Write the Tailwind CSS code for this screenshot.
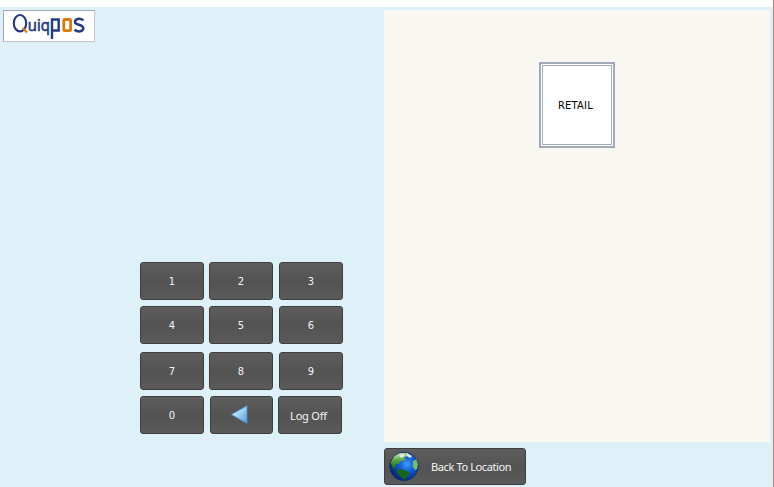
<!DOCTYPE html>
<html lang="en">
<head>
<meta charset="utf-8">
<title>Quiqpos</title>
<script src="https://cdn.jsdelivr.net/npm/@tailwindcss/browser@4"></script>
</head>
<body class="flex w-[774px] h-[487px] overflow-hidden bg-[#def1f8] text-[11px] leading-none font-['DejaVu_Sans_Condensed','DejaVu_Sans',sans-serif]">
<div class="flex h-[487px] w-[773px] shrink-0 border-t-[7px] border-t-white">
  <section class="w-[384px] shrink-0 pt-[3px]">
    <div class="ml-[3px] h-8 w-[92px] border border-[#c2c6d2] border-t-[#a4a8b4] border-l-[#a4a8b4] bg-white">
      <svg class="block" width="90" height="30" viewBox="4 11 90 30" fill="none" stroke="#253b80">
        <ellipse cx="20" cy="23.2" rx="6.2" ry="8.2" stroke-width="2.1"/>
        <path d="M22.5 28L27 32.5" stroke="#e87912" stroke-width="2.2"/>
        <text x="27.8" y="31" textLength="22" lengthAdjust="spacingAndGlyphs" fill="#253b80" stroke="#253b80" stroke-width=".7" font-size="17" font-family="Open Sans, sans-serif">uiq</text>
        <path d="M52 39V19.5H58.7V30.5H52" stroke-width="2.4"/>
        <rect x="63.8" y="19.5" width="6.8" height="11.2" rx="1" stroke="#d97910" stroke-width="2.8"/>
        <path d="M83.5 20.2C79 17.5 75 19.2 75 22C75 25.5 83.3 24 83.3 28.3C83.3 31.7 78 32.4 74.5 29.8" stroke-width="2.5"/>
      </svg>
    </div>
    <div class="mt-[220px] ml-[140px] flex flex-col items-start text-[#f4f4f4] [&_button]:h-[38px] [&_button]:w-16 [&_button]:rounded-[3px] [&_button]:border [&_button]:border-[#3e3e3e] [&_button]:bg-linear-to-b [&_button]:from-[#5e5e5e] [&_button]:via-[#535353] [&_button]:to-[#5a5a5a]">
      <div class="flex"><button>1</button><button class="ml-[5px]">2</button><button class="ml-1.5">3</button></div>
      <div class="mt-1.5 flex"><button>4</button><button class="ml-[5px]">5</button><button class="ml-1.5">6</button></div>
      <div class="mt-2 flex"><button>7</button><button class="ml-[5px]">8</button><button class="ml-1.5">9</button></div>
      <div class="mt-1.5 flex">
        <button>0</button>
        <button class="ml-1.5 w-[63px]! pl-5" aria-label="Backspace">
          <svg class="block" width="18" height="20" viewBox="0 0 18 20"><defs><linearGradient id="arrow" x2="1" y2="1"><stop stop-color="#e2f6ff"/><stop offset=".45" stop-color="#a5d8f5"/><stop offset="1" stop-color="#4c98d4"/></linearGradient></defs><path d="M.4 9.5L16 .8V18.5Z" fill="url(#arrow)" stroke="#4f91c8" stroke-width=".8"/></svg>
        </button>
        <button class="ml-[5px] pr-[3px] font-['Noto_Sans',sans-serif] text-[11px] whitespace-nowrap tracking-[-0.2px]">Log Off</button>
      </div>
    </div>
  </section>
  <main class="w-[389px] shrink-0 pt-[3px]">
    <div class="flex h-[432px] w-[386px] justify-center bg-[#f8f7f2] pt-[52px]">
      <button class="h-[86px] w-[76px] border-2 border-[#a3aab7] bg-white p-px text-black"><span class="flex h-full items-center justify-center border border-[#a3aab7] pr-[3px] tracking-[0.25px]">RETAIL</span></button>
    </div>
    <button class="mt-1.5 flex h-[37px] w-[142px] items-center rounded-[3px] border border-[#3e3e3e] bg-linear-to-b from-[#5e5e5e] via-[#535353] to-[#5a5a5a] pl-1 text-[#f4f4f4]">
      <svg class="shrink-0" width="31" height="31" viewBox="0 0 31 31">
        <defs>
          <radialGradient id="sea" cx=".6" cy=".42" r=".62"><stop stop-color="#3f9cfa"/><stop offset=".4" stop-color="#1460d4"/><stop offset="1" stop-color="#05206e"/></radialGradient>
          <linearGradient id="land" x2="0" y2="1"><stop stop-color="#a5d38f"/><stop offset=".5" stop-color="#4c9c3e"/><stop offset="1" stop-color="#0b5414"/></linearGradient>
          <clipPath id="globe"><circle cx="15" cy="15.5" r="14"/></clipPath>
        </defs>
        <circle cx="15" cy="15.5" r="14.3" fill="url(#sea)" stroke="#17345f" stroke-width=".7"/>
        <g clip-path="url(#globe)" fill="url(#land)">
          <path d="M2 11L5 5L10 2L18 2L19 5L15 6L17 9L12 10L10 13L7 13L6 16L8 19L4 17L2 13Z"/>
          <path d="M8 19L12 18L18 20L21 22L18 26L16 29L12 26L10 24L8 22Z" fill="#15661f"/>
          <path d="M24 10L28 8L29 13L28 18L26 19L24 16Z" fill="#78be62"/>
          <path d="M10 4L14 3L16 5L12 7ZM18 2L23 5L21 7L18 5Z" fill="#dbecdf"/>
        </g>
        <path d="M4 9C9 0 20 0 25 8C17 4 10 5 4 9Z" fill="#fff" opacity=".18"/>
      </svg>
      <span class="ml-[11px] font-['Noto_Sans',sans-serif] text-[11px] whitespace-nowrap tracking-[-0.38px]">Back To Location</span>
    </button>
  </main>
</div>
<div class="w-px shrink-0 bg-[#bd846c]"></div>
</body>
</html>
